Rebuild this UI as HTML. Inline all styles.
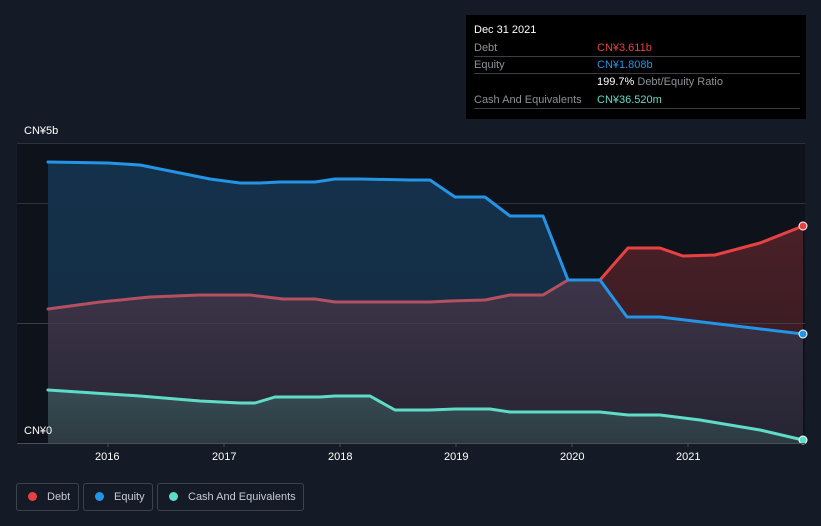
<!DOCTYPE html>
<html><head><meta charset="utf-8"><style>
*{margin:0;padding:0;box-sizing:border-box}
body{width:821px;height:526px;background:#151b26;font-family:"Liberation Sans",sans-serif;position:relative;overflow:hidden;color:#fff}
.tt{position:absolute;left:466px;top:15px;width:340px;height:104px;background:#000;font-size:11px}
.tt .r{position:absolute;left:8px;width:326px;border-bottom:1px solid #3a3f47;height:17px;line-height:17px}
.lab{color:#8d9096}
.v{position:absolute;left:123px}
.leg{position:absolute;top:483px;height:28px;border:1px solid #3d434d;border-radius:3px;font-size:11px;color:#c8cbd0;line-height:26px;white-space:nowrap}
.dot{display:inline-block;width:9px;height:9px;border-radius:50%;margin:0 10px 0 11px;vertical-align:-1px}
.ax{position:absolute;font-size:11px;color:#fff}
</style></head><body>
<svg width="821" height="526" style="position:absolute;left:0;top:0">
<defs>
<linearGradient id="gp" x1="0" y1="0" x2="0" y2="1"><stop offset="0" stop-color="#3d3549"/><stop offset="1" stop-color="#262432"/></linearGradient>
<linearGradient id="gr" x1="0" y1="0" x2="0" y2="1"><stop offset="0" stop-color="#4a2028"/><stop offset="1" stop-color="#3c1c23"/></linearGradient>
<linearGradient id="gc" x1="0" y1="0" x2="0" y2="1"><stop offset="0" stop-color="#374c53"/><stop offset="1" stop-color="#2d3a42"/></linearGradient>
<linearGradient id="gb" x1="0" y1="0" x2="0" y2="1"><stop offset="0" stop-color="#14314b"/><stop offset="1" stop-color="#132b41"/></linearGradient>
</defs>
<rect x="17" y="143" width="788" height="300" fill="#0e121a"/>
<g stroke="#2e333b" stroke-width="1">
<line x1="17" y1="143.5" x2="805" y2="143.5"/><line x1="17" y1="203.5" x2="805" y2="203.5"/>
</g>
<polygon fill="url(#gb)" points="48,162 108,163 140,165 175,172 210,179 240,183 260,183 280,182 315,182 335,179 360,179 410,180 430,180 455,197 485,197 510,216 543,216 568,280 600,280 627,317 660,317 803,334 803,443 48,443"/>
<polygon fill="url(#gp)" points="48,309 100,302 150,297 200,295 250,295 283,299 315,299 335,302 430,302 450,301 485,300 510,295 543,295 568,280 600,280 627,317 660,317 803,334 803,443 48,443"/>
<polygon fill="url(#gr)" points="600,280 628,248 660,248 683,256 715,255 760,243 803,226 803,334 660,317 627,317"/>
<line x1="17" y1="323.5" x2="805" y2="323.5" stroke="#3a3d48" stroke-width="1"/>
<polygon fill="url(#gc)" points="48,390 140,396 200,401 240,403 255,403 275,397 320,397 335,396 370,396 395,410 430,410 455,409 490,409 510,412 600,412 628,415 660,415 700,420 760,430 803,440 803,443 48,443"/>
<g fill="none" stroke-width="3" stroke-linejoin="round" stroke-linecap="round">
<polyline stroke="#b4505f" points="48,309 100,302 150,297 200,295 250,295 283,299 315,299 335,302 430,302 450,301 485,300 510,295 543,295 568,280"/>
<polyline stroke="#e84142" points="600,280 628,248 660,248 683,256 715,255 760,243 803,226"/>
<polyline stroke="#2394e6" points="48,162 108,163 140,165 175,172 210,179 240,183 260,183 280,182 315,182 335,179 360,179 410,180 430,180 455,197 485,197 510,216 543,216 568,280 600,280 627,317 660,317 803,334"/>
<polyline stroke="#5fdcc8" points="48,390 140,396 200,401 240,403 255,403 275,397 320,397 335,396 370,396 395,410 430,410 455,409 490,409 510,412 600,412 628,415 660,415 700,420 760,430 803,440"/>
</g>
<circle cx="803" cy="226" r="4" fill="#e84142" stroke="#fff" stroke-width="1"/>
<circle cx="803" cy="334" r="4" fill="#2394e6" stroke="#fff" stroke-width="1"/>
<circle cx="803" cy="440" r="4" fill="#5fdcc8" stroke="#fff" stroke-width="1"/>
<line x1="17" y1="443.5" x2="805" y2="443.5" stroke="#4a5059"/>
<g stroke="#4a5059"><line x1="108" y1="443" x2="108" y2="447"/><line x1="224" y1="443" x2="224" y2="447"/><line x1="340" y1="443" x2="340" y2="447"/><line x1="456" y1="443" x2="456" y2="447"/><line x1="572" y1="443" x2="572" y2="447"/><line x1="688" y1="443" x2="688" y2="447"/></g>
</svg>
<div class="ax" style="left:24px;top:125px">CN¥5b</div>
<div class="ax" style="left:24px;top:425px">CN¥0</div>
<div class="ax" style="left:95px;top:451px">2016</div>
<div class="ax" style="left:212px;top:451px">2017</div>
<div class="ax" style="left:328px;top:451px">2018</div>
<div class="ax" style="left:444px;top:451px">2019</div>
<div class="ax" style="left:560px;top:451px">2020</div>
<div class="ax" style="left:676px;top:451px">2021</div>
<div class="tt">
<div style="position:absolute;left:8px;top:9px;font-size:11px">Dec 31 2021</div>
<div class="r" style="top:25px"><span class="lab">Debt</span><span class="v" style="color:#e84142">CN¥3.611b</span></div>
<div class="r" style="top:42px"><span class="lab">Equity</span><span class="v" style="color:#2394e6">CN¥1.808b</span></div>
<div class="r" style="top:59px;border:none"><span class="v">199.7% <span class="lab">Debt/Equity Ratio</span></span></div>
<div class="r" style="top:77px"><span class="lab">Cash And Equivalents</span><span class="v" style="color:#5fdcc8">CN¥36.520m</span></div>
</div>
<div class="leg" style="left:16px;width:63px"><span class="dot" style="background:#e84142"></span>Debt</div>
<div class="leg" style="left:83px;width:70px"><span class="dot" style="background:#2394e6"></span>Equity</div>
<div class="leg" style="left:157px;width:147px"><span class="dot" style="background:#5fdcc8"></span>Cash And Equivalents</div>
</body></html>
